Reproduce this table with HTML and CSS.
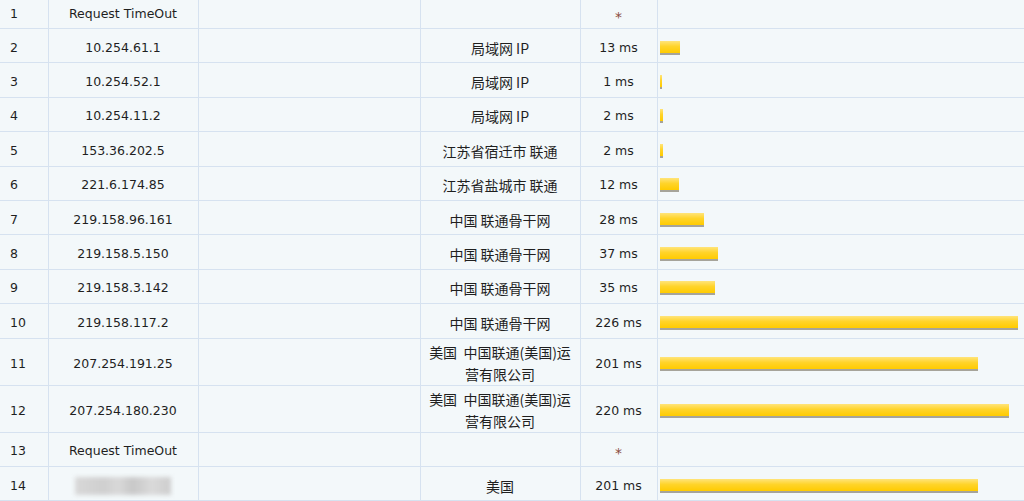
FILE: index.html
```html
<!DOCTYPE html>
<html lang="zh-CN">
<head>
<meta charset="UTF-8">
<title>Traceroute</title>
<link rel="stylesheet" href="styles.css">
</head>
<body>

<table class="trace">
<colgroup>
<col class="c-no"><col class="c-ip"><col class="c-host"><col class="c-loc"><col class="c-time"><col class="c-bar">
</colgroup>
<tr class="first">
<td class="no">1</td><td class="ip">Request TimeOut</td><td></td><td class="loc"></td><td class="time star">*</td><td></td>
</tr>
<tr>
<td class="no">2</td><td class="ip">10.254.61.1</td><td></td><td class="loc">局域网 IP</td><td class="time">13 ms</td><td><div class="bar" style="width:20px"></div></td>
</tr>
<tr>
<td class="no">3</td><td class="ip">10.254.52.1</td><td></td><td class="loc">局域网 IP</td><td class="time">1 ms</td><td><div class="bar" style="width:2px"></div></td>
</tr>
<tr>
<td class="no">4</td><td class="ip">10.254.11.2</td><td></td><td class="loc">局域网 IP</td><td class="time">2 ms</td><td><div class="bar" style="width:3px"></div></td>
</tr>
<tr>
<td class="no">5</td><td class="ip">153.36.202.5</td><td></td><td class="loc">江苏省宿迁市 联通</td><td class="time">2 ms</td><td><div class="bar" style="width:3px"></div></td>
</tr>
<tr>
<td class="no">6</td><td class="ip">221.6.174.85</td><td></td><td class="loc">江苏省盐城市 联通</td><td class="time">12 ms</td><td><div class="bar" style="width:19px"></div></td>
</tr>
<tr>
<td class="no">7</td><td class="ip">219.158.96.161</td><td></td><td class="loc">中国 联通骨干网</td><td class="time">28 ms</td><td><div class="bar" style="width:44px"></div></td>
</tr>
<tr>
<td class="no">8</td><td class="ip">219.158.5.150</td><td></td><td class="loc">中国 联通骨干网</td><td class="time">37 ms</td><td><div class="bar" style="width:58px"></div></td>
</tr>
<tr>
<td class="no">9</td><td class="ip">219.158.3.142</td><td></td><td class="loc">中国 联通骨干网</td><td class="time">35 ms</td><td><div class="bar" style="width:55px"></div></td>
</tr>
<tr>
<td class="no">10</td><td class="ip">219.158.117.2</td><td></td><td class="loc">中国 联通骨干网</td><td class="time">226 ms</td><td><div class="bar" style="width:358px"></div></td>
</tr>
<tr class="tall">
<td class="no">11</td><td class="ip">207.254.191.25</td><td></td><td class="loc">美国&nbsp; 中国联通(美国)运营有限公司</td><td class="time">201 ms</td><td><div class="bar" style="width:318px"></div></td>
</tr>
<tr class="tall">
<td class="no">12</td><td class="ip">207.254.180.230</td><td></td><td class="loc">美国&nbsp; 中国联通(美国)运营有限公司</td><td class="time">220 ms</td><td><div class="bar" style="width:349px"></div></td>
</tr>
<tr>
<td class="no">13</td><td class="ip">Request TimeOut</td><td></td><td class="loc"></td><td class="time star">*</td><td></td>
</tr>
<tr>
<td class="no">14</td><td class="ip"><div class="blur"></div></td><td></td><td class="loc">美国</td><td class="time">201 ms</td><td><div class="bar" style="width:318px"></div></td>
</tr>
</table>

</body>
</html>
```

FILE: styles.css
```css
/* ---------- GLOBAL ---------- */
*{margin:0;padding:0;box-sizing:border-box;}
html,body{background:#f3f8fa;overflow:hidden;}
body{font-family:"DejaVu Sans","Noto Sans CJK SC",sans-serif;font-size:12.5px;color:#1f1f1f;}

/* ---------- TABLE ---------- */
.trace{
width:1030px;
border-collapse:collapse;
table-layout:fixed;
}
.c-no{width:48px;}
.c-ip{width:150px;}
.c-host{width:222px;}
.c-loc{width:160px;}
.c-time{width:77px;}
.trace td{
height:34.4px;
padding-top:4px;
border:1px solid #d6e2f0;
text-align:center;
vertical-align:middle;
line-height:22px;
}
.trace tr:first-child td{border-top:none;height:28px;padding-top:0;}
.trace td:first-child{border-left:none;}
.trace tr.tall td{height:47px;padding-top:2px;}
.trace tr.tall td.time,.trace tr.tall td.no,.trace tr.tall td.ip{padding-top:5px;}

.no{text-align:left !important;padding-left:10px;}
.loc{
font-family:"Noto Sans CJK SC",sans-serif;
font-size:14px;
padding-left:6px;
padding-right:6px;
}
.star{color:#8a4b3c;font-size:14px;}
.trace td.star{padding-top:8px;}
.trace tr:first-child td.star{padding-top:6px;}

/* ---------- BARS ---------- */
.bar{
height:14px;
margin-left:2px;
background:linear-gradient(#ffe47a,#ffd42a 45%,#ffcb00);
border-bottom:2px solid #a6a49a;
}
.trace tr.tall .bar{margin-top:3px;}

/* ---------- MASKED ---------- */
.blur{
width:96px;
height:18px;
margin:0 auto;
background:linear-gradient(90deg,#d8d8d8,#cfcfcf 30%,#d9d9d9 45%,#c8c8c8 60%,#dadada 80%,#cdcdcd);
filter:blur(2px);
}
```
